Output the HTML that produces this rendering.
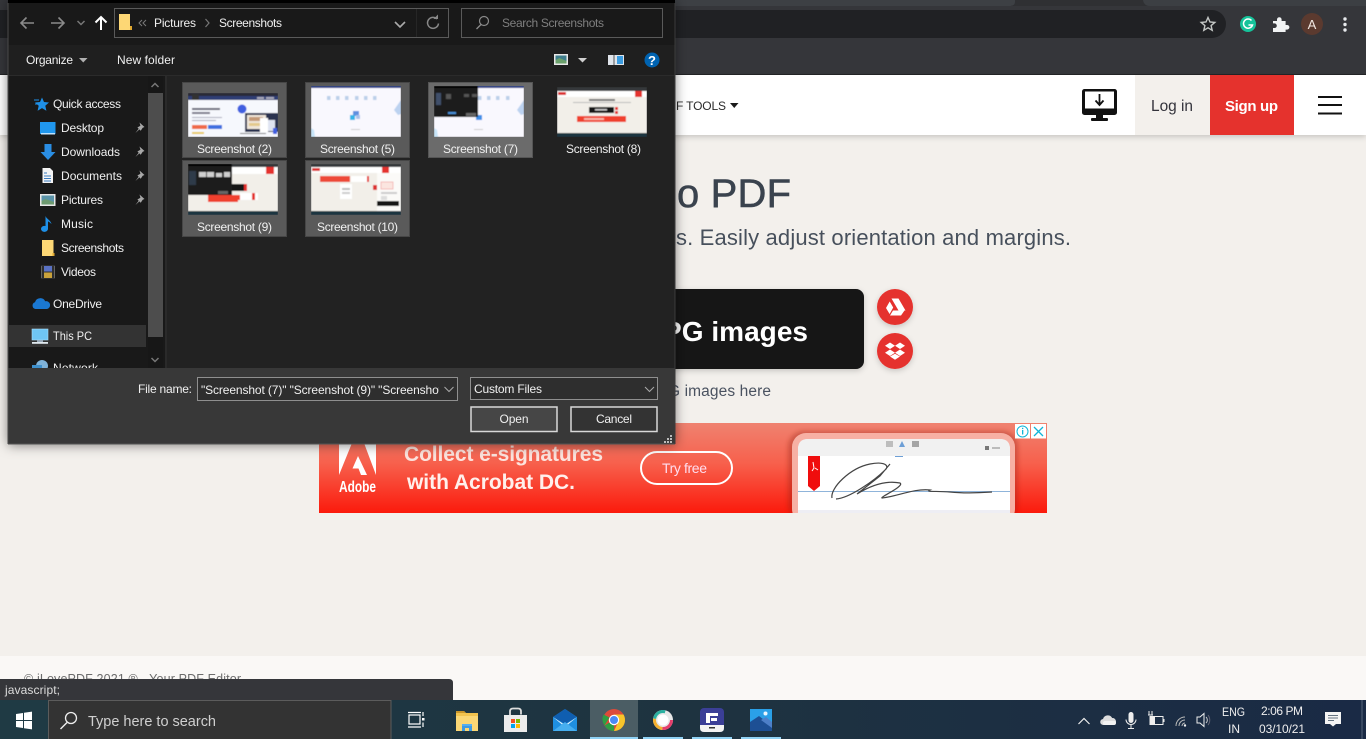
<!DOCTYPE html>
<html lang="en"><head><meta charset="utf-8"><title>JPG to PDF</title>
<style>
html,body{margin:0;padding:0;width:1366px;height:739px;overflow:hidden;background:#f3f0ec}
svg{display:block;position:absolute;left:0;top:0}
text{font-family:"Liberation Sans",sans-serif;white-space:pre}
.d{font-size:12px;fill:#f0f0f0}
</style></head><body>
<svg width="1366" height="739" viewBox="0 0 1366 739" xmlns="http://www.w3.org/2000/svg">
<defs>
<linearGradient id="ad" x1="0" y1="0" x2="0" y2="1"><stop offset="0" stop-color="#ef8270"/><stop offset=".45" stop-color="#f7604c"/><stop offset="1" stop-color="#fb1a0c"/></linearGradient>
<linearGradient id="tb" x1="0" y1="0" x2="1" y2="0"><stop offset="0" stop-color="#1f3a44"/><stop offset=".5" stop-color="#1e3340"/><stop offset="1" stop-color="#1a2a45"/></linearGradient>
<filter id="sh" x="-10%" y="-10%" width="120%" height="120%"><feDropShadow dx="0" dy="1" stdDeviation="6" flood-color="#000" flood-opacity=".5"/></filter>
<filter id="sb" x="-20%" y="-20%" width="140%" height="140%"><feGaussianBlur stdDeviation="2.5"/></filter>
<filter id="s1" x="-20%" y="-20%" width="140%" height="140%"><feDropShadow dx="0" dy="2" stdDeviation="3" flood-color="#000" flood-opacity=".18"/></filter>
<filter id="tbl" x="0" y="0" width="100%" height="100%"><feGaussianBlur stdDeviation=".45"/></filter>
<clipPath id="adc"><rect x="319" y="423" width="728" height="90"/></clipPath>
<clipPath id="fc"><rect x="0" y="656" width="1366" height="23"/></clipPath>
<clipPath id="ic"><rect x="198" y="378" width="241" height="21"/></clipPath>
</defs>

<!-- page -->
<rect width="1366" height="739" fill="#f3f0ec"/>

<!-- browser chrome -->
<rect width="1366" height="75" fill="#35363a"/>
<path d="M670 0H1015V2Q1015 6 1009 6H670Z" fill="#3d4044"/>
<path d="M1015 0H1143V0Q1144 6 1150 6H1009Q1015 6 1015 2Z" fill="#2f3033"/>
<path d="M1143 0H1366V6H1150Q1144 6 1143 0Z" fill="#3c3f43"/>
<rect x="-40" y="10" width="1266" height="28" rx="14" fill="#202124"/>
<rect y="74" width="1366" height="1" fill="#232426"/>
<path d="M1208 17.5l2 4.5 4.8.4-3.7 3.2 1.1 4.7-4.2-2.5-4.2 2.5 1.1-4.7-3.7-3.2 4.8-.4z" fill="none" stroke="#c4c7c5" stroke-width="1.4"/>
<circle cx="1248" cy="24" r="8" fill="#15c39a"/>
<path d="M1251.5 20.5a4.6 4.6 0 1 0 1 4.5h-4" fill="none" stroke="#fff" stroke-width="1.5"/>
<path d="M1273 21h4v-1.500a2.300 2.300 0 0 1 4.600 0V21h4v4h1.500a2.300 2.300 0 0 1 0 4.600H1285.600v2.400h-12.600v-4h1.500a2.300 2.300 0 0 0 0-4.600H1273z" fill="#f1f3f4"/>
<circle cx="1312" cy="24" r="11" fill="#5b3a2f"/>
<text x="1312" y="29" text-anchor="middle" font-size="13" fill="#f2e8e2">A</text>
<g fill="#e8eaed"><circle cx="1345" cy="19" r="1.700"/><circle cx="1345" cy="24.500" r="1.700"/><circle cx="1345" cy="30" r="1.700"/></g>

<!-- site header -->
<rect y="75" width="1366" height="60" fill="#fff" filter="url(#s1)"/>
<text x="676" y="110" font-size="12" fill="#2b2b2b" textLength="50">F TOOLS</text>
<path d="M730 103h8.500l-4.250 5z" fill="#1b1b1b"/>
<rect x="1082" y="89" width="35" height="26" rx="2.500" fill="#111"/>
<rect x="1085" y="91.500" width="29" height="17" fill="#fff"/>
<path d="M1099.500 94v10.500M1095.500 100.500l4 4.500 4-4.500" fill="none" stroke="#111" stroke-width="1.800"/>
<rect x="1096" y="114" width="7" height="5" fill="#111"/><rect x="1091" y="118" width="17" height="3" rx="1" fill="#111"/>
<rect x="1135" y="75" width="75" height="60" fill="#f3f0ec"/>
<text x="1151" y="111" font-size="15.500" fill="#33333b" textLength="42" lengthAdjust="spacingAndGlyphs">Log in</text>
<rect x="1210" y="75" width="84" height="60" fill="#e5322d"/>
<text x="1225" y="111" font-size="15" font-weight="bold" fill="#fff" textLength="53">Sign up</text>
<g fill="#111"><rect x="1318" y="96" width="24" height="2"/><rect x="1318" y="104" width="24" height="2"/><rect x="1318" y="112.500" width="24" height="2"/></g>

<!-- hero -->
<text x="677" y="207" font-size="40" fill="#3a434e" stroke="#3a434e" stroke-width=".5" textLength="114">o PDF</text>
<text x="676" y="245" font-size="22" fill="#47505c" textLength="395">s. Easily adjust orientation and margins.</text>
<rect x="500" y="289" width="364" height="80" rx="8" fill="#151515" filter="url(#s1)"/>
<text x="663" y="341" font-size="28" font-weight="bold" fill="#fff" textLength="145">PG images</text>
<circle cx="895" cy="307" r="18" fill="#e5322d" filter="url(#s1)"/>
<path d="M891.500 298.500h7l7 12h-7zM889.700 301.500l3.500 6-3.600 6.500-3.600-6zM893 310.500h11.500l-3.500 5h-11z" fill="#fff"/>
<circle cx="895" cy="351" r="18" fill="#e5322d" filter="url(#s1)"/>
<path d="M890 342.500l5 3.300-5 3.200-5-3.200zM900 342.500l5 3.300-5 3.200-5-3.200zM890 349.500l5 3.200-5 3.300-5-3.300zM900 349.500l5 3.200-5 3.300-5-3.300zM890 356.500l5-2.700 5 2.700-5 3.300z" fill="#fff"/>
<text x="668" y="396" font-size="15.500" fill="#4a5260" textLength="103">G images here</text>

<!-- ad -->
<rect x="319" y="423" width="728" height="90" fill="url(#ad)"/>
<g clip-path="url(#adc)">
<rect x="788" y="431" width="230" height="90" rx="16" fill="#8c1c10" opacity=".35" filter="url(#sb)"/>
<rect x="792" y="433" width="223" height="90" rx="14" fill="#f7b0a4"/>
<rect x="798" y="439" width="212" height="84" rx="10" fill="#fff"/>
<path d="M798 456v-7q0-10 10-10h192q10 0 10 10v7z" fill="#f1f1f1"/>
<rect x="798" y="510" width="212" height="3" fill="#eeeef4"/>
<rect x="886" y="441" width="7" height="6" fill="#bdbdbd"/><path d="M899 447l3-6 3 6z" fill="#6d9fd6"/><rect x="912" y="441" width="7" height="6" fill="#a5a5a5"/>
<rect x="895" y="456" width="8" height="1" fill="#6d9fd6"/>
<rect x="985" y="446" width="4" height="4" fill="#777"/><rect x="992" y="447" width="8" height="2" fill="#bbb"/>
<rect x="798" y="491" width="212" height="1" fill="#8fb4da"/>
<path d="M808 456h12v30l-6 5-6-5z" fill="#f00d0d"/>
<path d="M813 462l1 6-2 3M815 468l3 2" fill="none" stroke="#fff" stroke-width="1"/>
<path d="M832 498C830 488 850 468 870 464 885 461 890 466 885 470 875 480 850 498 836 499M890 464L880 476 857 494C870 486 885 480 900 483 905 486 880 497 882 498 895 497 915 488 930 490 925 492 935 491 950 492 970 494 990 492 992 492" fill="none" stroke="#444" stroke-width="1.200"/>
</g>
<rect x="1015" y="424" width="15" height="14.500" fill="#fff"/><rect x="1031" y="424" width="15" height="14.500" fill="#fff"/>
<circle cx="1022.500" cy="431.500" r="5.500" fill="none" stroke="#10b5d8" stroke-width="1"/>
<rect x="1022" y="430" width="1.300" height="4.500" fill="#10b5d8"/><rect x="1022" y="427.800" width="1.300" height="1.300" fill="#10b5d8"/>
<path d="M1034 427l9 9M1043 427l-9 9" stroke="#10b5d8" stroke-width="1.300"/>
<path d="M339 443h13l-13 32zM364 443h12v32zM358 456l9 19h-6l-2.500-6.500h-6z" fill="#fff"/>
<text x="339" y="492" font-size="16" font-weight="bold" fill="#fff" textLength="37" lengthAdjust="spacingAndGlyphs">Adobe</text>
<text x="404" y="461" font-size="21" font-weight="bold" fill="#fde3dd" textLength="199">Collect e-signatures</text>
<text x="407" y="489" font-size="21" font-weight="bold" fill="#fff0ec" textLength="168">with Acrobat DC.</text>
<rect x="641" y="452" width="91" height="32" rx="16" fill="none" stroke="#fff" stroke-width="2"/>
<text x="662" y="473" font-size="14" fill="#fde" textLength="45">Try free</text>

<!-- footer -->
<rect y="656" width="1366" height="44" fill="#faf8f6"/>
<text x="24" y="683" font-size="12.500" fill="#6c6c6c" textLength="217" clip-path="url(#fc)">© iLovePDF 2021 ® - Your PDF Editor</text>
<path d="M0 679H449q4 0 4 4V700H0z" fill="#35363a"/>
<text x="5" y="694" font-size="12" fill="#dcdcdc" textLength="55">javascript;</text>

<!-- dialog -->
<rect x="8" y="0" width="667" height="444" fill="#202020" filter="url(#sh)"/>
<rect x="8" y="0" width="667" height="3" fill="#000"/>
<rect x="8" y="3" width="667" height="42" fill="#191919"/>
<rect x="8" y="45" width="667" height="30" fill="#1f1f1f"/>
<rect x="8" y="75" width="667" height="1" fill="#2b2b2b"/>
<rect x="8" y="76" width="157" height="292" fill="#191919"/>
<rect x="165" y="76" width="2" height="292" fill="#2a2a2a"/>
<rect x="148" y="76" width="15" height="292" fill="#171717"/>
<rect x="148" y="93" width="15" height="244" fill="#4d4d4d"/>
<path d="M151.500 87l3.500-3.500 3.500 3.500" fill="none" stroke="#777" stroke-width="1.500"/>
<path d="M151.500 358l3.500 3.500 3.500-3.500" fill="none" stroke="#777" stroke-width="1.500"/>

<!-- toolbar -->
<path d="M34 23H21M26.500 17.500L21 23l5.500 5.500" fill="none" stroke="#8a8a8a" stroke-width="1.600"/>
<path d="M51 23H64M58.500 17.500L64 23l-5.500 5.500" fill="none" stroke="#8a8a8a" stroke-width="1.600"/>
<path d="M77.500 21l3.500 3.500 3.500-3.500" fill="none" stroke="#777" stroke-width="1.500"/>
<path d="M101 30V17M95.500 22.500L101 17l5.500 5.500" fill="none" stroke="#fff" stroke-width="2"/>
<rect x="114.500" y="8.500" width="334" height="29" fill="#191919" stroke="#5a5a5a"/>
<rect x="416" y="9" width="1" height="28" fill="#262626"/>
<path d="M119 14h11v12h2v4h-13z" fill="#fdd775"/><path d="M130 26h2v4h-2z" fill="#e0a830"/>
<path d="M142 20l-3 3 3 3M146 20l-3 3 3 3" fill="none" stroke="#7a7a7a"/>
<text class="d" x="154" y="27" textLength="42">Pictures</text>
<path d="M205.500 19l3.500 4-3.500 4" fill="none" stroke="#777" stroke-width="1.200"/>
<text class="d" x="219" y="27" textLength="63">Screenshots</text>
<path d="M395 22l5 5 5-5" fill="none" stroke="#aaa" stroke-width="1.600"/>
<path d="M437 19a5.500 5.500 0 1 0 1.500 4.500" fill="none" stroke="#888" stroke-width="1.500"/><path d="M433.500 19h4.500v-4.500z" fill="#888"/>
<rect x="461.500" y="8.500" width="201" height="29" fill="#191919" stroke="#5a5a5a"/>
<circle cx="484" cy="21" r="4.500" fill="none" stroke="#8a8a8a" stroke-width="1.200"/><path d="M481 24.500L476.500 29" stroke="#8a8a8a" stroke-width="1.300"/>
<text x="502" y="27" font-size="12" fill="#7f7f7f" textLength="102">Search Screenshots</text>

<!-- command bar -->
<text class="d" x="26" y="64" textLength="47">Organize</text>
<path d="M79 58h8.500l-4.250 4.500z" fill="#b0b0b0"/>
<text class="d" x="117" y="64" textLength="58">New folder</text>
<rect x="554" y="54" width="14" height="11" fill="#e8e8e8"/><rect x="555.500" y="55.500" width="11" height="8" fill="#3e7d8c"/><path d="M555.500 60l4-2 7 3v2.500h-11z" fill="#6ba16c"/>
<path d="M578 58h9l-4.500 4.500z" fill="#d0d0d0"/>
<rect x="608" y="55" width="16" height="10" fill="#dfe4ea"/><rect x="617" y="56" width="6" height="8" fill="#3b9ce0"/><rect x="613.500" y="55" width="1" height="10" fill="#555"/>
<circle cx="652" cy="60" r="7.500" fill="#0063b1"/>
<text x="652" y="65" text-anchor="middle" font-size="13" font-weight="bold" fill="#fff">?</text>

<!-- nav -->
<rect x="9" y="325" width="137" height="22" fill="#333"/>
<path d="M42 97.500l2 4.500 5 .5-3.700 3.300 1.100 5-4.400-2.700-4.400 2.700 1.100-5-3.700-3.300 5-.5z" fill="#1e90e8"/>
<path d="M34 100h5M35 104h3" stroke="#1e90e8"/>
<rect x="40" y="122" width="15.500" height="12" fill="#2097ee"/><rect x="41" y="133" width="14" height="1.500" fill="#bfe3ff"/>
<path d="M44.500 144h7v8h4l-7.500 8-7.500-8h4z" fill="#2a8ee4"/>
<path d="M42.500 168h7.500l3 3v12h-10.500z" fill="#f3f3f3"/><path d="M44 173h3M44 176h7M44 178.500h7M44 181h7" stroke="#3a7bbf"/>
<rect x="40" y="194" width="15.500" height="12" fill="#e8e8e8"/><rect x="41.500" y="195.500" width="12.500" height="9" fill="#5a93a8"/><path d="M41.500 201l4-2 8.500 3v2.500H41.500z" fill="#6d9a70"/>
<path d="M48 216v13a3.500 3 0 1 1-2.500-3V216c1 3 5 4 6 8-2-2-3-2.500-3.500-2.500" fill="#1e90e8"/>
<path d="M42 240h11.500v13h1v3H42z" fill="#fdd775"/><rect x="52.500" y="253" width="2" height="3" fill="#e0a830"/>
<rect x="41" y="265" width="14" height="14" fill="#2e2e2e"/><rect x="44" y="266" width="8" height="5.500" fill="#5a72c4"/><rect x="44" y="272.500" width="8" height="5.500" fill="#c9a23c"/><path d="M41.500 266.500v12M54.500 266.500v12" stroke="#999" stroke-dasharray="1 1"/>
<path d="M35.500 309a3.500 3.500 0 0 1-.5-6.800 5.500 5.500 0 0 1 10.200-1 4 4 0 0 1 1.800 7.800z" fill="#1a78d2"/>
<rect x="32" y="329" width="16" height="11" fill="#6fc6f4"/><rect x="32" y="329" width="16" height="11" fill="none" stroke="#a8def8" stroke-width=".6"/><rect x="37" y="340" width="6" height="2" fill="#9ab"/><rect x="32" y="342" width="16" height="1.800" fill="#dfe8ee"/>
<circle cx="42" cy="366" r="6" fill="#7fb2d8"/><rect x="32" y="365" width="10" height="4" fill="#3e8fcb"/>
<g class="d">
<text class="d" x="53" y="108" textLength="68">Quick access</text>
<text class="d" x="61" y="132" textLength="43">Desktop</text>
<text class="d" x="61" y="156" textLength="59">Downloads</text>
<text class="d" x="61" y="180" textLength="61">Documents</text>
<text class="d" x="61" y="204" textLength="42">Pictures</text>
<text class="d" x="61" y="228" textLength="32">Music</text>
<text class="d" x="61" y="252" textLength="63">Screenshots</text>
<text class="d" x="61" y="276" textLength="35">Videos</text>
<text class="d" x="53" y="308" textLength="49">OneDrive</text>
<text class="d" x="53" y="340" textLength="39" lengthAdjust="spacingAndGlyphs">This PC</text>
<text class="d" x="53" y="372" textLength="45">Network</text>
</g>
<g fill="#a8a8a8">
<path d="M139.500 122.500l5 4.500-1.800.7-2 3-1.300-1.300-4 3.600 3.300-4.200-1.300-1.300 3-1.800z"/>
<path d="M139.500 146.500l5 4.500-1.800.7-2 3-1.300-1.300-4 3.600 3.300-4.200-1.300-1.300 3-1.800z"/>
<path d="M139.500 170.500l5 4.500-1.800.7-2 3-1.300-1.300-4 3.600 3.300-4.200-1.300-1.300 3-1.800z"/>
<path d="M139.500 194.500l5 4.500-1.800.7-2 3-1.300-1.300-4 3.600 3.300-4.200-1.300-1.300 3-1.800z"/>
</g>

<!-- tiles -->
<rect x="182.500" y="82.500" width="104" height="75" fill="#5a5a5a" stroke="#464646"/>
<rect x="305.500" y="82.500" width="104" height="75" fill="#5a5a5a" stroke="#464646"/>
<rect x="428.500" y="82.500" width="104" height="75" fill="#6b6b6b" stroke="#555"/>
<rect x="182.500" y="160.500" width="104" height="76" fill="#5a5a5a" stroke="#464646"/>
<rect x="305.500" y="160.500" width="104" height="76" fill="#5a5a5a" stroke="#464646"/>

<!-- thumb 2 -->
<g transform="translate(188 93)" filter="url(#tbl)">
<rect width="90" height="44" fill="#f6f8fd"/><rect width="90" height="3" fill="#2c2c34"/><rect y="3" width="90" height="4" fill="#2d3e74"/><rect x="4" y="1" width="7" height="6" fill="#333"/>
<rect x="69" y="4" width="7" height="2" fill="#aab"/><rect x="78" y="4" width="8" height="2" fill="#aab"/>
<rect x="4" y="15" width="28" height="2" fill="#667"/><rect x="4" y="19" width="18" height="2" fill="#778"/><rect x="4" y="24" width="30" height="1" fill="#aab"/><rect x="4" y="27" width="24" height="1" fill="#aab"/>
<rect x="4" y="32" width="15" height="4" fill="#ef6a4a"/><rect x="20" y="32" width="14" height="4" fill="#3f6fe0"/><rect x="4" y="39" width="12" height="2" fill="#e8c85a"/>
<circle cx="54" cy="16" r="4.500" fill="#3f5ee0"/>
<rect x="57" y="20" width="33" height="19" fill="#2b3350"/><rect x="59" y="22" width="19" height="14" fill="#efe6da"/><rect x="61" y="24" width="14" height="4" fill="#c49a78"/><rect x="61" y="30" width="14" height="3" fill="#e4c98c"/>
<rect x="72" y="25" width="8" height="14" fill="#fff"/><rect x="80" y="27" width="7" height="11" fill="#dfe4f2"/><rect x="85" y="35" width="4" height="6" fill="#3f5ee0"/><rect x="52" y="40" width="26" height="1" fill="#777"/>
</g>
<!-- thumb 5 -->
<g transform="translate(311 86)" filter="url(#tbl)">
<rect width="90" height="51" fill="#f9f8fe"/><rect width="90" height="2" fill="#2c3c88"/>
<path d="M90 14l-7 10 4 5 3-1z" fill="#bcd2f0"/><path d="M0 51v-9l3 2 1 7z" fill="#c6e4f8"/>
<g fill="#bcd0ea"><rect x="16" y="10" width="3.500" height="4"/><rect x="25" y="10" width="3.500" height="4"/><rect x="34" y="10" width="3.500" height="4"/><rect x="44" y="10" width="3.500" height="4"/><rect x="53" y="10" width="3.500" height="4"/><rect x="62" y="10" width="3.500" height="4"/></g>
<rect x="42" y="25" width="6" height="5" fill="#5f8fe0"/><rect x="39" y="29" width="5" height="5" fill="#36b4e8"/><rect x="45" y="29" width="4" height="4" fill="#a8c0ea"/><rect x="40" y="43" width="9" height="1" fill="#ccc"/>
</g>
<!-- thumb 7 -->
<g transform="translate(434 86)" filter="url(#tbl)">
<rect width="90" height="51" fill="#f9f8fe"/><rect width="90" height="2" fill="#2c3c88"/>
<path d="M90 14l-7 10 4 5 3-1z" fill="#bcd2f0"/><path d="M0 51v-9l3 2 1 7z" fill="#c6e4f8"/>
<g fill="#bcd0ea"><rect x="44" y="10" width="3.500" height="4"/><rect x="53" y="10" width="3.500" height="4"/><rect x="62" y="10" width="3.500" height="4"/><rect x="72" y="10" width="3.500" height="4"/></g>
<rect x="42" y="29" width="6" height="5" fill="#3f90e8"/><rect x="40" y="43" width="9" height="1" fill="#ccc"/>
<rect width="44" height="31" fill="#1c1c1c"/><rect width="44" height="2" fill="#000"/>
<rect x="2" y="7" width="5" height="12" fill="#40506a"/><rect x="12" y="8" width="5" height="5" fill="#555"/><rect x="30" y="8" width="5" height="3" fill="#555"/><rect x="38" y="8" width="5" height="3" fill="#555"/><rect x="14" y="26" width="8" height="2" fill="#4a90d8"/><rect x="32" y="27" width="10" height="3" fill="#666"/>
</g>
<!-- thumb 8 -->
<g transform="translate(557 87)" filter="url(#tbl)">
<rect width="90" height="50" fill="#f2efe9"/><rect width="90" height="4" fill="#36373a"/><rect y="4" width="90" height="6" fill="#fff"/><rect x="1" y="5" width="8" height="3" fill="#d33"/><rect x="78" y="4" width="7" height="6" fill="#e5322d"/>
<rect x="32" y="12" width="26" height="2" fill="#777"/><rect x="16" y="15" width="58" height="1" fill="#bbb"/>
<rect x="32" y="20" width="25" height="6" fill="#171717"/><rect x="38" y="22" width="12" height="1.500" fill="#ccc"/><rect x="58" y="20" width="3" height="3" fill="#e5322d"/><rect x="58" y="24" width="3" height="3" fill="#e5322d"/>
<rect x="20" y="29" width="49" height="6" fill="#f0402e"/><rect x="27" y="31" width="20" height="2" fill="#f7b4a8"/>
<rect y="46" width="90" height="4" fill="#1e3440"/>
</g>
<!-- thumb 9 -->
<g transform="translate(188 164)" filter="url(#tbl)">
<rect width="90" height="51" fill="#f2efe9"/><rect width="90" height="3" fill="#36373a"/><rect y="3" width="90" height="7" fill="#fff"/><rect x="78" y="3" width="8" height="7" fill="#e5322d"/>
<rect x="30" y="20" width="26" height="7" fill="#171717"/><rect x="56" y="20" width="3" height="7" fill="#e5322d"/>
<rect x="20" y="31" width="44" height="5" fill="#f0402e"/><rect x="52" y="29" width="18" height="7" fill="#fff"/><rect x="64" y="29" width="3" height="7" fill="#e5322d"/><rect x="20" y="33" width="30" height="5" fill="#f0402e"/>
<rect width="44" height="31" fill="#1c1c1c"/><rect width="44" height="2" fill="#000"/>
<rect x="1" y="7" width="7" height="14" fill="#2f3a48"/><g fill="#cfcfcf"><rect x="11" y="8" width="7" height="5"/><rect x="19" y="8" width="7" height="5"/><rect x="28" y="9" width="6" height="4"/><rect x="36" y="8" width="6" height="5"/></g><rect x="30" y="27" width="10" height="3" fill="#666"/>
<rect y="47" width="90" height="4" fill="#1e3440"/>
</g>
<!-- thumb 10 -->
<g transform="translate(311 164)" filter="url(#tbl)">
<rect width="90" height="51" fill="#f2efe9"/><rect width="90" height="3" fill="#36373a"/><rect y="3" width="90" height="6" fill="#fff"/><rect x="1" y="4" width="8" height="3" fill="#d33"/><rect x="71" y="3" width="7" height="6" fill="#e5322d"/>
<rect x="9" y="12" width="30" height="6" fill="#ee4a38"/><rect x="40" y="12" width="16" height="6" fill="#fff"/><rect x="56" y="12" width="2" height="6" fill="#e5322d"/>
<rect x="29" y="20" width="12" height="15" fill="#fff"/><rect x="31" y="24" width="8" height="2" fill="#bbb"/><rect x="31" y="28" width="8" height="2" fill="#ccc"/>
<rect x="62" y="21" width="5" height="5" fill="#d33"/>
<rect x="66" y="9" width="24" height="38" fill="#fbfaf8"/><rect x="70" y="18" width="12" height="7" fill="#fbe5e0" stroke="#e88" stroke-width=".5"/><rect x="70" y="32" width="6" height="4" fill="#ddd"/><rect x="70" y="28" width="16" height="2" fill="#ccc"/>
<rect x="66" y="37" width="22" height="5" fill="#171717"/>
<rect y="47" width="90" height="4" fill="#1e3440"/>
</g>
<text x="197" y="153" class="d" textLength="75">Screenshot (2)</text>
<text x="320" y="153" class="d" textLength="75">Screenshot (5)</text>
<text x="443" y="153" class="d" textLength="75">Screenshot (7)</text>
<text x="566" y="153" class="d" fill="#fff" textLength="75">Screenshot (8)</text>
<text x="197" y="231" class="d" textLength="75">Screenshot (9)</text>
<text x="317" y="231" class="d" textLength="81">Screenshot (10)</text>

<!-- bottom panel -->
<rect x="8" y="368" width="667" height="76" fill="#383838"/>
<text class="d" x="138" y="393" textLength="54">File name:</text>
<rect x="197.500" y="377.500" width="260" height="23" fill="#2e2e2e" stroke="#8f8f8f"/>
<text class="d" x="201" y="394" clip-path="url(#ic)" textLength="241">"Screenshot (7)" "Screenshot (9)" "Screenshot</text>
<path d="M444.500 387l4.500 4.500 4.500-4.500" fill="none" stroke="#aaa"/>
<rect x="470.500" y="377.500" width="187" height="22" fill="#2e2e2e" stroke="#8f8f8f"/>
<text class="d" x="474" y="393" textLength="68">Custom Files</text>
<path d="M645 387l4.500 4.500 4.500-4.500" fill="none" stroke="#aaa"/>
<rect x="471" y="407" width="86" height="24.500" fill="#464646" stroke="#d8d8d8" stroke-width="1.500"/>
<text class="d" x="499.500" y="423" textLength="29">Open</text>
<rect x="571" y="407" width="86" height="24.500" fill="#333" stroke="#d8d8d8" stroke-width="1.500"/>
<text class="d" x="596" y="423" textLength="36">Cancel</text>
<g fill="#bbb"><rect x="670" y="435" width="2" height="2"/><rect x="667" y="438" width="2" height="2"/><rect x="670" y="438" width="2" height="2"/><rect x="664" y="441" width="2" height="2"/><rect x="667" y="441" width="2" height="2"/><rect x="670" y="441" width="2" height="2"/></g>
<rect x="8" y="443.500" width="667" height="1" fill="#555"/>
<rect x="7.500" y="3" width="1" height="441" fill="#4a4a4a"/>
<rect x="674.500" y="3" width="1" height="441" fill="#3c3c3c"/>

<!-- taskbar -->
<rect y="700" width="1366" height="39" fill="url(#tb)"/>
<g fill="#fff"><path d="M16 714l7-1v7h-7z"/><path d="M24 712.800l8-1.200v8.400h-8z"/><path d="M16 721h7v7l-7-1z"/><path d="M24 721h8v8.400l-8-1.200z"/></g>
<rect x="48" y="700" width="343" height="39" fill="#333"/>
<path d="M48.500 739V700.500H391V739" fill="none" stroke="#5c5c5c"/>
<circle cx="71" cy="718" r="5.500" fill="none" stroke="#eee" stroke-width="1.300"/><path d="M67 722.500L60.500 729" stroke="#eee" stroke-width="1.400"/>
<text x="88" y="726" font-size="14.500" fill="#d0d0d0" textLength="128">Type here to search</text>
<rect x="409" y="715" width="11" height="9" fill="none" stroke="#fff" stroke-width="1.200"/><path d="M408 712.500h13M408 727h13M423 712v4M423 722.500V727" stroke="#fff" stroke-width="1.200"/><rect x="422" y="718" width="2.500" height="2.500" fill="#fff"/>
<path d="M456 711h8l2 2h12v18h-22z" fill="#f2c34e"/><path d="M456 711h8l2 2h-10z" fill="#c9952a"/><path d="M456 716h22v15h-22z" fill="#fbd775"/><path d="M462 731v-6h10v6h-3v-3h-4v3z" fill="#3d9ae4"/><rect x="462" y="724" width="10" height="2" fill="#55aef0"/>
<path d="M504 715h23v17h-23z" fill="#ececec"/><path d="M510 715v-3.500q0-3 3-3h5q3 0 3 3v3" fill="none" stroke="#ddd" stroke-width="1.800"/>
<rect x="511" y="719" width="4" height="4" fill="#f25022"/><rect x="516" y="719" width="4" height="4" fill="#7fba00"/><rect x="511" y="724" width="4" height="4" fill="#00a4ef"/><rect x="516" y="724" width="4" height="4" fill="#ffb900"/>
<path d="M553 717l12-8 12 8v14h-24z" fill="#1f8fe0"/><path d="M565 709l12 8-12 7-12-7z" fill="#0f5eb0"/><path d="M553 717l12 8 12-8-12 10z" fill="#e8f4fc"/><path d="M553 731l12-9 12 9z" fill="#46aef0"/>
<rect x="590" y="700" width="48" height="39" fill="#4b5d64"/>
<circle cx="614" cy="720" r="11" fill="#dd4b3a"/><path d="M614 731a11 11 0 0 1-9.500-5.500l4.700-2.700 5 2.700z" fill="#2f9e44"/><path d="M603.500 714.500a11 11 0 0 0 1 11l5-8z" fill="#2f9e44"/><path d="M614 731a11 11 0 0 0 9.500-16.500H614l4 8z" fill="#f7c52b"/><circle cx="614" cy="720" r="5.200" fill="#fff"/><circle cx="614" cy="720" r="4" fill="#4a8af4"/>
<circle cx="663" cy="720" r="10" fill="#e8e8e8"/><circle cx="663" cy="720" r="8.500" fill="none" stroke="#e63f6c" stroke-width="3" stroke-dasharray="14 40"/><circle cx="663" cy="720" r="8.500" fill="none" stroke="#f4b02e" stroke-width="3" stroke-dasharray="14 40" stroke-dashoffset="-14"/><circle cx="663" cy="720" r="8.500" fill="none" stroke="#2ab0a0" stroke-width="3" stroke-dasharray="14 40" stroke-dashoffset="-28"/><circle cx="663" cy="720" r="5.500" fill="#fff"/>
<rect x="700" y="708" width="24" height="24" rx="4" fill="#3b3f97"/><path d="M700 725h24v3q0 4-4 4h-16q-4 0-4-4z" fill="#f3f3f3"/><rect x="706" y="713" width="12" height="3" fill="#fff"/><rect x="706" y="713" width="4" height="10" fill="#fff"/><rect x="711" y="718" width="6" height="3" fill="#fff"/><rect x="709" y="727" width="6" height="1.500" fill="#333"/>
<rect x="750" y="709" width="22" height="22" fill="#2aa0e8"/><path d="M750 731v-9l9-6 13 10v5z" fill="#1d4f94"/><path d="M761 720l5-3 6 5v6z" fill="#4d7fc8"/><circle cx="765.500" cy="713.500" r="2" fill="#eaf6ff"/>
<g fill="#90d2f5"><rect x="590" y="737" width="48" height="2"/><rect x="643" y="737" width="40" height="2"/><rect x="692" y="737" width="40" height="2"/><rect x="741" y="737" width="40" height="2"/></g>

<!-- tray -->
<path d="M1078.500 724l5.500-5.500 5.500 5.500" fill="none" stroke="#eee" stroke-width="1.200"/>
<path d="M1103.500 725a3 3 0 0 1-.5-6 5 5 0 0 1 9.200-1 3.700 3.700 0 0 1 1.800 7z" fill="#ddd"/><rect x="1103" y="721" width="13" height="4" rx="2" fill="#f2f2f2"/>
<rect x="1128.500" y="712" width="5" height="11" rx="2.500" fill="#eee"/><path d="M1126 719.500a5 5 0 0 0 10 0M1131 725v3M1128 728.500h6" fill="none" stroke="#eee"/>
<rect x="1150" y="716.500" width="13" height="8" fill="none" stroke="#eee"/><rect x="1150" y="716.500" width="5" height="8" fill="#eee"/><rect x="1163" y="719" width="1.500" height="3" fill="#eee"/><path d="M1149 711v4M1152 711v4M1148 715h5" stroke="#eee"/>
<path d="M1176 726a9 9 0 0 1 9-9M1179 726a6 6 0 0 1 6-6M1182 726a3 3 0 0 1 3-3" fill="none" stroke="#bbb"/><circle cx="1185" cy="725.500" r="1.200" fill="#eee"/>
<path d="M1197 717h3l4-3.500v13l-4-3.500h-3z" fill="none" stroke="#eee"/><path d="M1206 717a4 4 0 0 1 0 6" fill="none" stroke="#ccc"/><path d="M1208 715a8 8 0 0 1 0 10" fill="none" stroke="#667"/>
<text x="1222" y="716" font-size="12" fill="#eee" textLength="23" lengthAdjust="spacingAndGlyphs">ENG</text>
<text x="1228" y="733" font-size="12" fill="#eee" textLength="12">IN</text>
<text x="1261" y="715" font-size="12" fill="#eee" textLength="42">2:06 PM</text>
<text x="1259" y="733" font-size="12" fill="#eee" textLength="46">03/10/21</text>
<path d="M1325 712h16v12h-5l-3 2.500-3-2.500h-5z" fill="#f4f4f4"/><path d="M1328 715.500h10M1328 718h10M1328 720.500h6" stroke="#33475a" stroke-width=".8"/>
<rect x="1361.500" y="700" width="1" height="39" fill="#55657a"/>
</svg>
</body></html>
